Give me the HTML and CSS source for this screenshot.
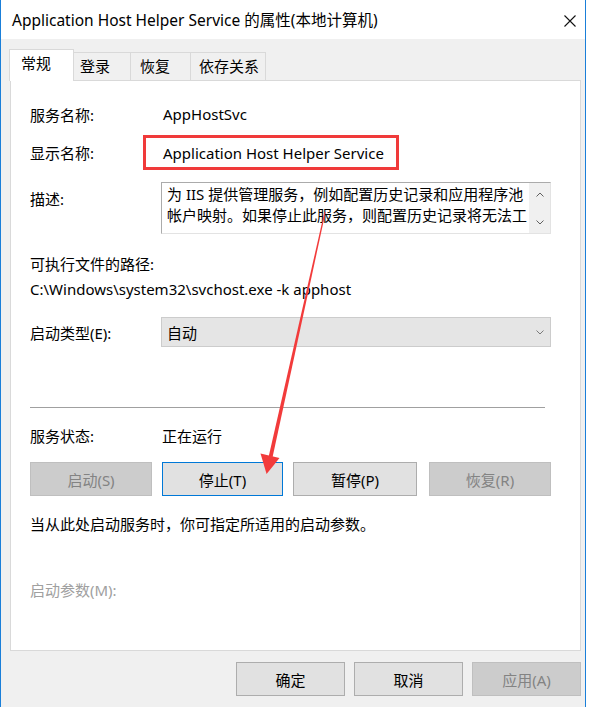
FILE: index.html
```html
<!DOCTYPE html>
<html lang="zh-CN">
<head>
<meta charset="utf-8">
<title>Application Host Helper Service 的属性(本地计算机)</title>
<link rel="stylesheet" href="styles.css">
</head>
<body>
<div class="window">
  <div class="titlebar">
    <span class="title">Application Host Helper Service 的属性(本地计算机)</span>
    <svg class="close" width="12" height="12" viewBox="0 0 12 12"><path d="M0.5 0.5 L11.5 11.5 M11.5 0.5 L0.5 11.5" stroke="#111" stroke-width="1.1" fill="none"/></svg>
  </div>
  <div class="client">
    <div class="tabs">
      <div class="tab active">常规</div>
      <div class="tab t2">登录</div>
      <div class="tab t3">恢复</div>
      <div class="tab t4">依存关系</div>
    </div>
    <div class="panel">
      <div class="row r1"><span class="lbl w133">服务名称:</span><span>AppHostSvc</span></div>
      <div class="row r2"><span class="lbl w113">显示名称:</span><span class="redbox">Application Host Helper Service</span></div>
      <div class="row r3">
        <span class="lbl w131 top">描述:</span>
        <div class="desc">
          <div class="desc-text">
            <div class="dl">为 IIS 提供管理服务，例如配置历史记录和应用程序池</div>
            <div class="dl">帐户映射。如果停止此服务，则配置历史记录将无法工</div>
          </div>
          <div class="scroll">
            <svg width="8" height="5" viewBox="0 0 8 5"><path d="M0.5 4.5 L4 1 L7.5 4.5" stroke="#606060" fill="none"/></svg>
            <svg width="8" height="5" viewBox="0 0 8 5"><path d="M0.5 0.5 L4 4 L7.5 0.5" stroke="#606060" fill="none"/></svg>
          </div>
        </div>
      </div>
      <div class="line path-label">可执行文件的路径:</div>
      <div class="line">C:\Windows\system32\svchost.exe -k apphost</div>
      <div class="row r4">
        <span class="lbl w131">启动类型(E):</span>
        <div class="combo"><span>自动</span>
          <svg width="8" height="5" viewBox="0 0 8 5"><path d="M0.5 0.5 L4 4 L7.5 0.5" stroke="#7a7a7a" fill="none"/></svg>
        </div>
      </div>
      <div class="sep"></div>
      <div class="row r5"><span class="lbl w132">服务状态:</span><span>正在运行</span></div>
      <div class="btnrow">
        <button class="btn disabled b1">启动(S)</button>
        <button class="btn focus b2">停止(T)</button>
        <button class="btn b3">暂停(P)</button>
        <button class="btn disabled b4">恢复(R)</button>
      </div>
      <div class="hint">当从此处启动服务时，你可指定所适用的启动参数。</div>
      <div class="params">启动参数(M):</div>
    </div>
    <div class="footer">
      <button class="btn fbtn">确定</button>
      <button class="btn fbtn">取消</button>
      <button class="btn fbtn disabled">应用(A)</button>
    </div>
  </div>
  <svg class="arrow" width="590" height="707" viewBox="0 0 590 707">
    <polygon points="324.4,212 325.6,212 272.6,457 268.8,456" fill="#f23b3b"/>
    <polygon points="260.5,453.5 279.5,458 266.6,474" fill="#f23b3b"/>
  </svg>
</div>
</body>
</html>
```

FILE: styles.css
```css
* { box-sizing: border-box; }
html, body { margin: 0; padding: 0; background: #ffffff; }
body {
  font-family: "Noto Sans", "Noto Sans CJK SC", sans-serif;
  font-size: 15px;
  color: #000;
}
.window {
  position: relative;
  width: 586px;
  height: 707px;
  border-left: 1px solid #1a7fd9;
  border-right: 1px solid #1a7fd9;
  background: #f0f0f0;
  overflow: hidden;
}
.titlebar {
  height: 39px;
  background: #ffffff;
  display: flex;
  align-items: center;
  padding-left: 11px;
}
.title { font-size: 15.5px; line-height: 20px; margin-top: 1px; }
.close { margin-left: auto; margin-right: 9px; margin-top: 2px; }
.client { padding: 10px 0 0 8px; }
.tabs { display: flex; align-items: flex-end; height: 32px; position: relative; z-index: 1; }
.tab {
  height: 28px;
  margin-bottom: 1px;
  border: 1px solid #d9d9d9;
  border-bottom: none;
  border-left: none;
  background: #f0f0f0;
  line-height: 26px;
  padding-left: 6px;
}
.tab.active {
  height: 32px;
  margin-bottom: 0;
  width: 65px;
  border-left: 1px solid #d9d9d9;
  background: #ffffff;
  padding-left: 11px;
  line-height: 27px;
}
.t2 { width: 57px; }
.t3 { width: 60px; padding-left: 9px; }
.t4 { width: 75px; padding-left: 8px; }
.panel {
  margin-top: -1px;
  margin-left: 1px;
  width: 571px;
  height: 571px;
  background: #ffffff;
  border: 1px solid #d9d9d9;
  padding-left: 19px;
  display: flex;
  flex-direction: column;
}
.row { display: flex; align-items: center; }
.lbl { flex: none; }
.w133 { width: 133px; }
.w113 { width: 113px; }
.w131 { width: 131px; }
.w132 { width: 132px; }
.r1 { margin-top: 18px; height: 30px; }
.r2 { margin-top: 6px; height: 35px; }
.redbox {
  width: 256px;
  height: 35px;
  border: 3px solid #f03a3a;
  padding-left: 17px;
  display: flex;
  align-items: center;
}
.r3 { margin-top: 12px; height: 52px; align-items: flex-start; }
.top { padding-top: 7px; line-height: 20px; }
.desc {
  width: 390px;
  height: 52px;
  border: 1px solid #ababab;
  border-right-color: #e3e3e3;
  border-bottom-color: #e3e3e3;
  display: flex;
}
.desc-text {
  flex: 1;
  padding: 1px 0 0 5px;
  line-height: 21px;
  white-space: nowrap;
}
.scroll {
  width: 21px;
  background: #f0f0f0;
  display: flex;
  flex-direction: column;
  align-items: center;
  justify-content: space-between;
  padding: 9px 0 8px;
}
.line { line-height: 25px; height: 25px; }
.path-label { margin-top: 18px; }
.r4 { margin-top: 15px; height: 30px; }
.combo {
  width: 390px;
  height: 30px;
  background: #e5e5e5;
  border: 1px solid #cccccc;
  display: flex;
  align-items: center;
  padding: 0 6px 0 5px;
  justify-content: space-between;
}
.sep { margin-top: 60px; height: 1px; width: 515px; background: #a0a0a0; }
.r5 { margin-top: 15px; height: 24px; }
.btnrow { margin-top: 15px; height: 34px; display: flex; }
.btn {
  font-family: inherit;
  font-size: 15px;
  color: #000;
  height: 34px;
  background: #e1e1e1;
  border: 1px solid #adadad;
  padding: 0;
  margin: 0;
}
.btn.disabled { background: #cccccc; border-color: #bfbfbf; color: #838383; }
.btn.focus { border-color: #0078d7; background: #e1e1e1; }
.b1 { width: 122px; }
.b2 { width: 121px; margin-left: 10px; }
.b3 { width: 124px; margin-left: 10px; }
.b4 { width: 122px; margin-left: 12px; }
.hint { margin-top: 16px; line-height: 24px; }
.params { margin-top: 42px; line-height: 24px; color: #a0a0a0; }
.footer {
  margin-top: 11px;
  margin-left: 1px;
  width: 571px;
  display: flex;
  justify-content: flex-end;
  gap: 9px;
}
.fbtn { width: 109px; }
.arrow { position: absolute; left: -1px; top: 0; pointer-events: none; }
```
